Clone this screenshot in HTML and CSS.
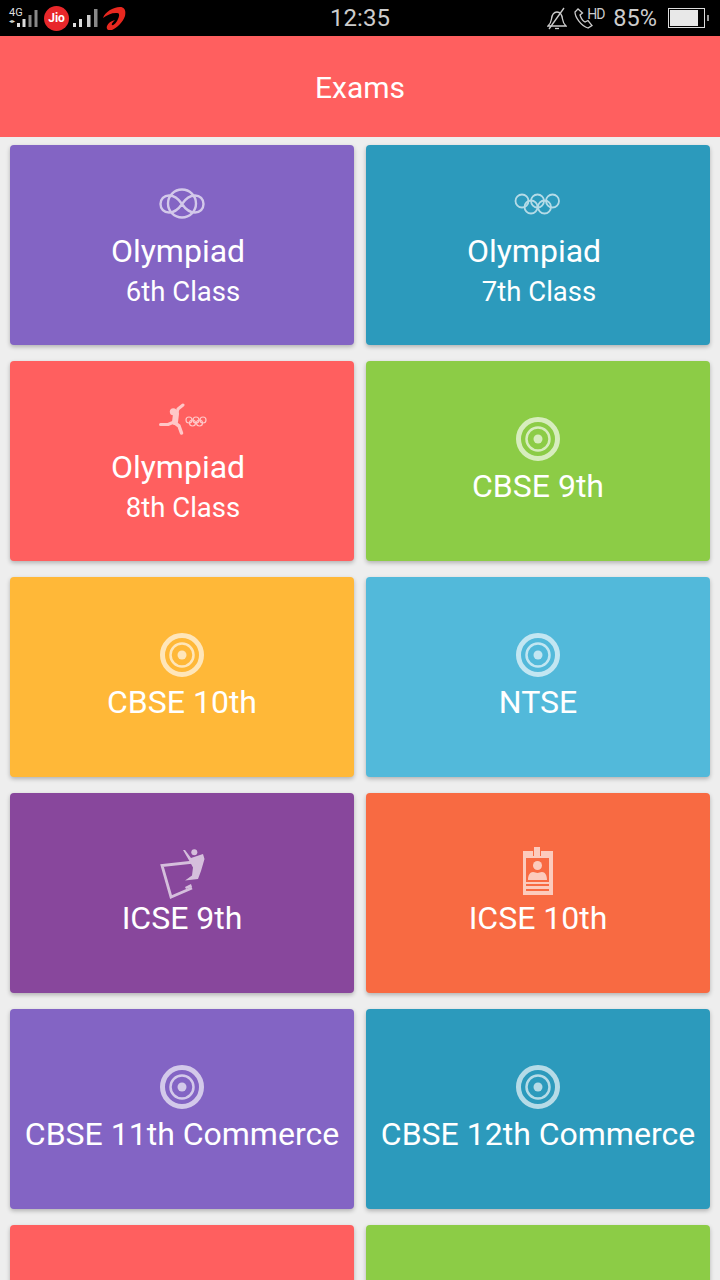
FILE: index.html
```html
<!DOCTYPE html>
<html lang="en">
<head>
<meta charset="UTF-8" />
<title>Exams</title>
<link rel="stylesheet" href="styles.css">
</head>
<body>

<svg class="defs" width="0" height="0">
  <symbol id="target" viewBox="0 0 48 48">
    <circle cx="24" cy="24" r="19.500" fill="none" stroke="#fff" stroke-width="5"/>
    <circle cx="24" cy="24" r="11.500" fill="none" stroke="#fff" stroke-width="2.500"/>
    <circle cx="24" cy="24" r="4.500" fill="#fff"/>
  </symbol>
</svg>

<div class="status-bar">
  <div class="status-left">
    <span class="net"><span class="net-label">4G</span><span class="net-arrows">&#9666;&#9656;</span></span>
    <svg class="bars-sim1" width="26" height="24" viewBox="0 0 26 24">
      <rect x="0" y="17" width="3" height="4" fill="#ddd"/>
      <rect x="5.500" y="13" width="3" height="8" fill="#ddd"/>
      <rect x="11.500" y="9" width="3" height="12" fill="#888"/>
      <rect x="17.500" y="4" width="3" height="17" fill="#888"/>
    </svg>
    <span class="jio">Jio</span>
    <svg class="bars-sim2" width="26" height="24" viewBox="0 0 26 24">
      <rect x="0" y="17" width="3" height="4" fill="#ddd"/>
      <rect x="6" y="13" width="3" height="8" fill="#ddd"/>
      <rect x="14" y="9" width="3.500" height="12" fill="#ccc"/>
      <rect x="21" y="3" width="3.500" height="18" fill="#888"/>
    </svg>
    <svg class="airtel" width="26" height="24" viewBox="0 0 26 24">
      <path d="M2 12C4 6 12 1 19 1c5 0 6 4 5 9-2 6-8 12-13 14-4 1-6-1-5-4 1-3 4-5 8-6-2 2-4 4-3 5 2 1 6-4 7-9 .5-3-1-3-3-3-5 0-9 2-13 5z" fill="#e8281f"/>
    </svg>
  </div>
  <div class="clock">12:35</div>
  <div class="status-right">
    <svg class="bell" width="20" height="24" viewBox="0 0 20 24" fill="none" stroke="#ccc" stroke-width="1.300">
      <path d="M1 20c2-2 3-3 3.500-7 .5-4 2-7 5.500-7s5 3 5.500 7c.5 4 1.500 5 3.500 7z"/>
      <path d="M8 22.500h4"/>
      <path d="M17 2L2 23"/>
    </svg>
    <svg class="phone" width="20" height="24" viewBox="0 0 20 24" fill="none" stroke="#ccc" stroke-width="1.300">
      <path d="M4 3L1 6c0 5 6 14 13 16l4-2.500-4-5-3 1.500c-2-1-4-4-5-7l2.500-2z"/>
    </svg>
    <span class="hd">HD</span>
    <span class="battery-pct">85%</span>
    <span class="battery"><span class="battery-fill"></span></span><span class="battery-tip"></span>
  </div>
</div>

<div class="app-bar">Exams</div>

<div class="exam-grid">

  <div class="exam-card purple">
    <svg class="exam-icon" width="48" height="48" viewBox="0 0 48 48" fill="none" stroke="#fff" stroke-width="2.400">
      <path d="M24 24C20 18 15 15.500 11 15.500 6 15.500 2.500 19 2.500 24S6 32.500 11 32.500c4 0 9-2.500 13-8.500 4-6 9-8.500 13-8.500 5 0 8.500 3.500 8.500 8.500S42 32.500 37 32.500c-4 0-9-2.500-13-8.500z"/>
      <circle cx="24" cy="23.500" r="14"/>
    </svg>
    <div class="exam-title">Olympiad&nbsp;</div>
    <div class="exam-sub">6th Class</div>
  </div>

  <div class="exam-card teal">
    <svg class="exam-icon" width="48" height="48" viewBox="0 0 48 48" fill="none" stroke="#fff" stroke-width="1.800">
      <circle cx="8" cy="21" r="6.500"/>
      <circle cx="23.500" cy="21" r="6.500"/>
      <circle cx="38.500" cy="21" r="6.500"/>
      <circle cx="17" cy="27" r="6.500"/>
      <circle cx="30.500" cy="27" r="6.500"/>
    </svg>
    <div class="exam-title">Olympiad&nbsp;</div>
    <div class="exam-sub">7th Class</div>
  </div>

  <div class="exam-card red">
    <svg class="exam-icon" width="48" height="48" viewBox="0 0 48 48">
      <circle cx="15.300" cy="15.700" r="3.500" fill="#fff"/>
      <g fill="none" stroke="#fff" stroke-linecap="round" stroke-linejoin="round">
        <path d="M25 9L20 13 18 20" stroke-width="3"/>
        <path d="M18 18L17 26" stroke-width="6"/>
        <path d="M16 26L10 28.500 2.500 28.500" stroke-width="3"/>
        <path d="M17 27L21 30 23.500 37" stroke-width="3.500"/>
      </g>
      <g fill="none" stroke="#fff" stroke-width="1.200">
        <circle cx="31" cy="24" r="3"/>
        <circle cx="38" cy="24" r="3"/>
        <circle cx="45" cy="24" r="3"/>
        <circle cx="34.500" cy="27" r="3"/>
        <circle cx="41.500" cy="27" r="3"/>
      </g>
    </svg>
    <div class="exam-title">Olympiad&nbsp;</div>
    <div class="exam-sub">8th Class</div>
  </div>

  <div class="exam-card green">
    <svg class="exam-icon" width="48" height="48"><use href="#target"/></svg>
    <div class="exam-title">CBSE 9th</div>
  </div>

  <div class="exam-card yellow">
    <svg class="exam-icon" width="48" height="48"><use href="#target"/></svg>
    <div class="exam-title">CBSE 10th</div>
  </div>

  <div class="exam-card sky">
    <svg class="exam-icon" width="48" height="48"><use href="#target"/></svg>
    <div class="exam-title">NTSE</div>
  </div>

  <div class="exam-card plum">
    <svg class="exam-icon" width="48" height="48" viewBox="0 0 48 48">
      <path d="M36 15L4 18.500 13 50 34 41" fill="none" stroke="#fff" stroke-width="2.800"/>
      <path d="M27 40l6-3 1 3-6 2z" fill="#fff"/>
      <circle cx="36.300" cy="5.300" r="3" fill="#fff"/>
      <path d="M25 3l2 0 6 8 12-4 1.500 5-3.500 12-3 8-13 1.500 7-5 1-8-3-5.500z" fill="#fff"/>
    </svg>
    <div class="exam-title">ICSE 9th</div>
  </div>

  <div class="exam-card orange">
    <svg class="exam-icon" width="48" height="48" viewBox="0 0 48 48">
      <path d="M20 0h6v10h-6z" fill="#fff"/>
      <path fill-rule="evenodd" fill="#fff" d="M9 4h10v5h8V4h12v44H9zM12 11v24h23V11zM12 37v2h23v-2zM12 42v2h23v-2z"/>
      <circle cx="23.500" cy="18.500" r="4.500" fill="#fff"/>
      <path d="M14 33c0-5 2-8 5-8 2 0 3 1 4.500 1s2.500-1 4.500-1c3 0 5 3 5 8z" fill="#fff"/>
    </svg>
    <div class="exam-title">ICSE 10th</div>
  </div>

  <div class="exam-card purple">
    <svg class="exam-icon" width="48" height="48"><use href="#target"/></svg>
    <div class="exam-title">CBSE 11th Commerce</div>
  </div>

  <div class="exam-card teal">
    <svg class="exam-icon" width="48" height="48"><use href="#target"/></svg>
    <div class="exam-title">CBSE 12th Commerce</div>
  </div>

  <div class="exam-card red"></div>
  <div class="exam-card green"></div>

</div>

</body>
</html>
```

FILE: styles.css
```css
html, body {
  height: 1280px;
  overflow: hidden;
}
body {
  margin: 0;
  background: #eeeeee;
  font-family: Roboto, sans-serif;
  color: #fff;
}
.defs {
  display: block;
  height: 0;
}

/* status bar */
.status-bar {
  height: 36px;
  background: #000;
  display: grid;
  grid-template-columns: 1fr auto 1fr;
  align-items: center;
  color: #ddd;
}
.status-left {
  display: flex;
  align-items: center;
  padding-left: 9px;
}
.status-right {
  display: flex;
  align-items: center;
  justify-content: flex-end;
  padding-right: 11px;
}
.net {
  display: flex;
  flex-direction: column;
  width: 14px;
  line-height: 8px;
}
.net-label {
  font-size: 11px;
  line-height: 11px;
}
.net-arrows {
  font-size: 6px;
  line-height: 6px;
  margin-bottom: 6px;
}
.bars-sim1 {
  margin-left: -6px;
}
.jio {
  width: 25px;
  height: 25px;
  margin: 0 4px 0 1px;
  border-radius: 50%;
  background: #e8272a;
  color: #fff;
  font-size: 12px;
  font-weight: 700;
  line-height: 25px;
  text-align: center;
}
.airtel {
  margin-left: 2px;
}
.clock {
  font-size: 24px;
  color: #ccc;
}
.bell {
  margin-right: 7px;
}
.phone {
  margin-right: -7px;
}
.hd {
  font-size: 14px;
  letter-spacing: -1px;
  width: 15px;
  margin: 0 11px 8px 0;
  color: #ccc;
}
.battery-pct {
  font-size: 23.5px;
  color: #ccc;
  margin-right: 11px;
}
.battery {
  width: 33px;
  height: 16px;
  border: 1px solid #ddd;
  padding: 1px;
}
.battery-fill {
  display: block;
  width: 85%;
  height: 100%;
  background: #e8e8e8;
}
.battery-tip {
  width: 2px;
  height: 6px;
  background: #999;
  margin-left: 2px;
}

/* header */
.app-bar {
  box-sizing: border-box;
  height: 101px;
  padding-top: 2px;
  background: #ff5f5f;
  display: flex;
  align-items: center;
  justify-content: center;
  font-size: 30px;
}

/* cards */
.exam-grid {
  box-sizing: border-box;
  height: 1143px;
  overflow: hidden;
  display: grid;
  grid-template-columns: 344px 344px;
  grid-auto-rows: 200px;
  gap: 16px 12px;
  padding: 8px 10px;
}
.exam-card {
  border-radius: 4px;
  box-shadow: 0 2px 4px rgba(0, 0, 0, 0.25);
  display: flex;
  flex-direction: column;
  align-items: center;
  justify-content: center;
}
.exam-icon {
  overflow: visible;
  opacity: 0.65;
  margin-bottom: 3px;
}
.exam-title {
  font-size: 32px;
  line-height: 40px;
  margin-bottom: 1px;
  white-space: nowrap;
}
.exam-sub {
  font-size: 27.5px;
  line-height: 40px;
  margin-bottom: -1px;
  padding-left: 2px;
}
.purple { background: #8364c4; }
.teal { background: #2c9abc; }
.red { background: #ff5f5f; }
.green { background: #8ccc46; }
.yellow { background: #ffb838; }
.sky { background: #52b9da; }
.plum { background: #88479c; }
.orange { background: #f86a42; }
```
